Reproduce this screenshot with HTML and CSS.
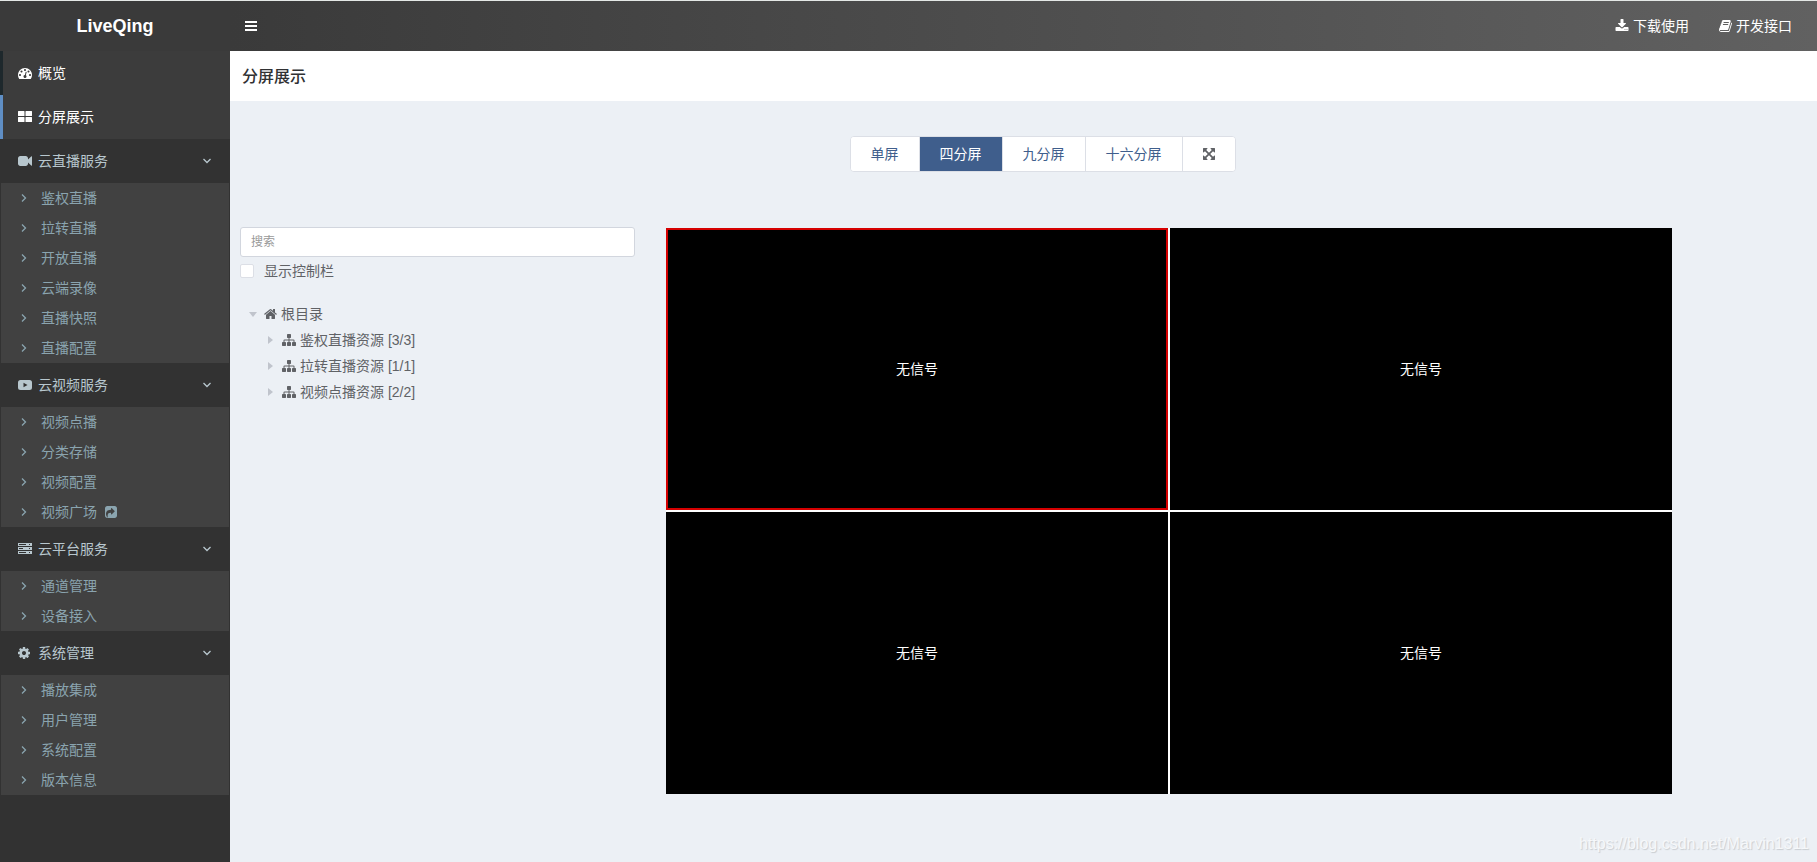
FILE: index.html
```html
<!DOCTYPE html>
<html lang="zh-CN">
<head>
<meta charset="utf-8">
<title>LiveQing</title>
<link rel="stylesheet" href="styles.css">
</head>
<body>
<svg class="sprite" aria-hidden="true">
  <symbol id="tachometer" viewBox="0 0 1792 1792"><path d="M384 1152q0-53-37.5-90.5t-90.5-37.5-90.5 37.5-37.5 90.5 37.5 90.5 90.5 37.5 90.5-37.5 37.5-90.5zm192-448q0-53-37.5-90.5t-90.5-37.5-90.5 37.5-37.5 90.5 37.5 90.5 90.5 37.5 90.5-37.5 37.5-90.5zm428 481l101-382q6-26-7.5-48.5t-38.5-29.5-48 6.5-30 39.5l-101 382q-60 5-107 43.5t-63 98.5q-20 77 20 146t117 89 146-20 89-117q16-60-6-117t-72-91zm660-33q0-53-37.5-90.5t-90.5-37.5-90.5 37.5-37.5 90.5 37.5 90.5 90.5 37.5 90.5-37.5 37.5-90.5zm-640-640q0-53-37.5-90.5t-90.5-37.5-90.5 37.5-37.5 90.5 37.5 90.5 90.5 37.5 90.5-37.5 37.5-90.5zm448 192q0-53-37.5-90.5t-90.5-37.5-90.5 37.5-37.5 90.5 37.5 90.5 90.5 37.5 90.5-37.5 37.5-90.5zm320 448q0 261-141 483-19 29-54 29h-1402q-35 0-54-29-141-221-141-483 0-182 71-348t191-286 286-191 348-71 348 71 286 191 191 286 71 348z"/></symbol>
  <symbol id="th-large" viewBox="0 0 14 14"><path d="M.5 1H6q.5 0 .5.5V5.500q0 .5-.5.5H.5Q0 6 0 5.500v-4Q0 1 .5 1zM8 1h5.500q.5 0 .5.5v4q0 .5-.5.5H8q-.5 0-.5-.5v-4Q7.500 1 8 1zM.5 7H6q.5 0 .5.5v4q0 .5-.5.5H.5q-.5 0-.5-.5v-4Q0 7 .5 7zM8 7h5.500q.5 0 .5.5v4q0 .5-.5.5H8q-.5 0-.5-.5v-4Q7.500 7 8 7z"/></symbol>
  <symbol id="video" viewBox="0 0 1792 1792"><path d="M1792 352v1088q0 42-39 59-13 5-25 5-27 0-45-19l-403-403v166q0 119-84.5 203.500t-203.500 84.500h-704q-119 0-203.500-84.500t-84.500-203.500v-704q0-119 84.500-203.500t203.500-84.500h704q119 0 203.500 84.500t84.500 203.500v165l403-402q18-19 45-19 12 0 25 5 39 17 39 59z"/></symbol>
  <symbol id="youtube" viewBox="0 0 14 14"><path fill-rule="evenodd" d="M2.500 2h9Q14 2 14 4.500v5Q14 12 11.500 12h-9Q0 12 0 9.500v-5Q0 2 2.500 2zM5.500 4.700v4.600L9.500 7z"/></symbol>
  <symbol id="server" viewBox="0 0 14 14"><path fill-rule="evenodd" d="M0 1h14v3H0zM1 2v1h7V2zM11 2v1h1V2zM0 5h14v3H0zM1 6v1h4V6zM11 6v1h1V6zM0 9h14v3H0zM1 10v1h7v-1zM11 10v1h1v-1z"/></symbol>
  <symbol id="cog" viewBox="128 0 1536 1792"><path d="M1152 896q0-106-75-181t-181-75-181 75-75 181 75 181 181 75 181-75 75-181zm512-109v222q0 12-8 23t-20 13l-185 28q-19 54-39 91 35 50 107 138 10 12 10 25t-9 23q-27 37-99 108t-94 71q-12 0-26-9l-138-108q-44 23-91 38-16 136-29 186-7 28-36 28h-222q-14 0-24.500-8.500t-11.500-21.500l-28-184q-49-16-90-37l-141 107q-10 9-25 9-14 0-25-11-126-114-165-168-7-10-7-23 0-12 8-23 15-21 51-66.500t54-70.500q-27-50-41-99l-183-27q-13-2-21-12.500t-8-23.500v-222q0-12 8-23t19-13l186-28q14-46 39-92-40-57-107-138-10-12-10-24 0-10 9-23 26-36 98.500-107.500t94.500-71.500q13 0 26 10l138 107q44-23 91-38 16-136 29-186 7-28 36-28h222q14 0 24.500 8.500t11.500 21.500l28 184q49 16 90 37l142-107q9-9 24-9 13 0 25 10 129 119 165 170 7 8 7 22 0 12-8 23-15 21-51 66.500t-54 70.500q26 50 41 98l183 28q13 2 21 12.500t8 23.500z"/></symbol>
  <symbol id="home" viewBox="64 0 1664 1792"><path d="M1472 992v480q0 26-19 45t-45 19h-384v-384h-256v384h-384q-26 0-45-19t-19-45v-480q0-1 .5-3t.5-3l575-474 575 474q1 2 1 6zm223-69l-62 74q-8 9-21 11h-3q-13 0-21-7l-692-577-692 577q-12 8-24 7-13-2-21-11l-62-74q-8-10-7-23.500t11-21.500l719-599q32-26 76-26t76 26l244 204v-195q0-14 9-23t23-9h192q14 0 23 9t9 23v408l219 182q10 8 11 21.500t-7 23.500z"/></symbol>
  <symbol id="sitemap" viewBox="0 0 1792 1792"><path d="M1792 1248v320q0 40-28 68t-68 28h-320q-40 0-68-28t-28-68v-320q0-40 28-68t68-28h96v-192h-512v192h96q40 0 68 28t28 68v320q0 40-28 68t-68 28h-320q-40 0-68-28t-28-68v-320q0-40 28-68t68-28h96v-192h-512v192h96q40 0 68 28t28 68v320q0 40-28 68t-68 28h-320q-40 0-68-28t-28-68v-320q0-40 28-68t68-28h96v-192q0-52 38-90t90-38h512v-192h-96q-40 0-68-28t-28-68v-320q0-40 28-68t68-28h320q40 0 68 28t28 68v320q0 40-28 68t-68 28h-96v192h512q52 0 90 38t38 90v192h96q40 0 68 28t28 68z"/></symbol>
  <symbol id="download" viewBox="0 0 1792 1792"><path d="M1344 1344q0-26-19-45t-45-19-45 19-19 45 19 45 45 19 45-19 19-45zm256 0q0-26-19-45t-45-19-45 19-19 45 19 45 45 19 45-19 19-45zm128-224v320q0 40-28 68t-68 28h-1472q-40 0-68-28t-28-68v-320q0-40 28-68t68-28h465l135 136q58 56 136 56t136-56l136-136h464q40 0 68 28t28 68zm-325-569q17 41-14 70l-448 448q-18 19-45 19t-45-19l-448-448q-31-29-14-70 17-39 59-39h256v-448q0-26 19-45t45-19h256q26 0 45 19t19 45v448h256q42 0 59 39z"/></symbol>
  <symbol id="book" viewBox="64 0 1664 1792"><path d="M1703 478q40 57 18 129l-275 906q-19 64-76.500 107.500t-122.500 43.500h-923q-77 0-148.500-53.500t-99.500-131.500q-24-67-2-127 0-4 3-27t4-37q1-8-3-21.500t-3-19.500q2-11 8-21t16.500-23.500 16.500-23.500q23-38 45-91.500t30-91.500q3-10 .5-30t-.5-28q3-11 17-28t17-23q21-36 42-92t25-90q1-9-2.500-32t.5-28q4-13 22-30.500t22-22.500q19-26 42.500-84.500t27.500-96.500q1-8-3-25.500t-2-26.500q2-8 9-18t18-23 17-21q8-12 16.500-30.500t15-35 16-36 19.500-32 26.500-23.500 36-11.500 47.500 5.500l-1 3q38-9 51-9h761q74 0 114 56t18 130l-274 906q-36 119-71.500 153.500t-128.500 34.500h-869q-27 0-38 15-11 16-1 43 24 70 144 70h923q29 0 56-15.500t35-41.500l300-987q7-22 5-57 38 15 59 43zm-1064 2q-4 13 2 22.500t20 9.500h608q13 0 25.500-9.500t16.500-22.500l21-64q4-13-2-22.500t-20-9.500h-608q-13 0-25.500 9.500t-16.500 22.500zm-83 256q-4 13 2 22.500t20 9.500h608q13 0 25.500-9.500t16.500-22.500l21-64q4-13-2-22.500t-20-9.500h-608q-13 0-25.500 9.500t-16.500 22.500z"/></symbol>
  <symbol id="expand" viewBox="128 128 1536 1536"><path d="M1411 541l-355 355 355 355 144-144q29-31 70-14 39 17 39 59v448q0 26-19 45t-45 19h-448q-42 0-59-40-17-39 14-69l144-144-355-355-355 355 144 144q31 30 14 69-17 40-59 40h-448q-26 0-45-19t-19-45v-448q0-42 40-59 39-17 69 14l144 144 355-355-355-355-144 144q-19 19-45 19-12 0-24-5-40-17-40-59v-448q0-26 19-45t45-19h448q42 0 59 40 17 39-14 69l-144 144 355 355 355-355-144-144q-31-30-14-69 17-40 59-40h448q26 0 45 19t19 45v448q0 42-39 59-13 5-25 5-26 0-45-19z"/></symbol>
  <symbol id="share" viewBox="128 128 1536 1536"><path d="M1005 1197l352-352q19-19 19-45t-19-45l-352-352q-30-31-69-14-40 17-40 59v160q-119 0-216 19.500t-162.500 51-114 79-76.500 95.500-44.500 109-21.500 111.500-5 110.500q0 181 167 404 10 12 25 12 7 0 13-3 22-9 19-33-44-354 62-473 46-52 130-75.500t224-23.500v160q0 42 40 59 12 5 24 5 26 0 45-19zm659-781v960q0 119-84.500 203.500t-203.500 84.500h-960q-119 0-203.500-84.500t-84.500-203.500v-960q0-119 84.500-203.500t203.500-84.500h960q119 0 203.500 84.500t84.500 203.500z"/></symbol>
  <symbol id="bars" viewBox="0 0 12 12"><path d="M0 1h12v2H0zM0 5h12v2H0zM0 9h12v2H0z"/></symbol>
  <symbol id="right" viewBox="0 0 6 10"><path class="line" d="M1 1.500L4.500 5 1 8.500"/></symbol>
  <symbol id="down" viewBox="0 0 10 10"><path class="line" d="M1.500 3L5 6.500 8.500 3"/></symbol>
</svg>

<header class="topbar">
  <a class="brand" href="#">LiveQing</a>
  <button class="toggle" type="button" aria-label="菜单"><svg class="icon-12"><use href="#bars"/></svg></button>
  <nav class="toplinks">
    <a href="#"><svg class="icon-14"><use href="#download"/></svg>下载使用</a>
    <a href="#"><svg class="icon-13"><use href="#book"/></svg>开发接口</a>
  </nav>
</header>

<div class="body">
  <nav class="sidebar">
    <a class="item top" href="#"><svg class="icon-14"><use href="#tachometer"/></svg><span>概览</span></a>
    <a class="item top active" href="#"><svg class="icon-14"><use href="#th-large"/></svg><span>分屏展示</span></a>

    <a class="item" href="#"><svg class="icon-14"><use href="#video"/></svg><span>云直播服务</span><svg class="caret"><use href="#down"/></svg></a>
    <ul class="sub">
      <li><a href="#"><svg class="chev"><use href="#right"/></svg>鉴权直播</a></li>
      <li><a href="#"><svg class="chev"><use href="#right"/></svg>拉转直播</a></li>
      <li><a href="#"><svg class="chev"><use href="#right"/></svg>开放直播</a></li>
      <li><a href="#"><svg class="chev"><use href="#right"/></svg>云端录像</a></li>
      <li><a href="#"><svg class="chev"><use href="#right"/></svg>直播快照</a></li>
      <li><a href="#"><svg class="chev"><use href="#right"/></svg>直播配置</a></li>
    </ul>

    <a class="item" href="#"><svg class="icon-14"><use href="#youtube"/></svg><span>云视频服务</span><svg class="caret"><use href="#down"/></svg></a>
    <ul class="sub">
      <li><a href="#"><svg class="chev"><use href="#right"/></svg>视频点播</a></li>
      <li><a href="#"><svg class="chev"><use href="#right"/></svg>分类存储</a></li>
      <li><a href="#"><svg class="chev"><use href="#right"/></svg>视频配置</a></li>
      <li><a href="#"><svg class="chev"><use href="#right"/></svg>视频广场<svg class="icon-12 share"><use href="#share"/></svg></a></li>
    </ul>

    <a class="item" href="#"><svg class="icon-14"><use href="#server"/></svg><span>云平台服务</span><svg class="caret"><use href="#down"/></svg></a>
    <ul class="sub">
      <li><a href="#"><svg class="chev"><use href="#right"/></svg>通道管理</a></li>
      <li><a href="#"><svg class="chev"><use href="#right"/></svg>设备接入</a></li>
    </ul>

    <a class="item" href="#"><svg class="icon-12 cog"><use href="#cog"/></svg><span>系统管理</span><svg class="caret"><use href="#down"/></svg></a>
    <ul class="sub">
      <li><a href="#"><svg class="chev"><use href="#right"/></svg>播放集成</a></li>
      <li><a href="#"><svg class="chev"><use href="#right"/></svg>用户管理</a></li>
      <li><a href="#"><svg class="chev"><use href="#right"/></svg>系统配置</a></li>
      <li><a href="#"><svg class="chev"><use href="#right"/></svg>版本信息</a></li>
    </ul>
  </nav>

  <main class="main">
    <h1 class="title">分屏展示</h1>
    <div class="modes">
      <div class="group">
        <button type="button">单屏</button>
        <button type="button" class="on">四分屏</button>
        <button type="button">九分屏</button>
        <button type="button">十六分屏</button>
        <button type="button" class="full" aria-label="全屏"><svg class="icon-12"><use href="#expand"/></svg></button>
      </div>
    </div>
    <div class="work">
      <section class="resources">
        <input class="search" type="text" placeholder="搜索" aria-label="搜索">
        <label class="check"><input type="checkbox"><span>显示控制栏</span></label>
        <ul class="tree">
          <li>
            <div class="node"><i class="tri open"></i><svg class="icon-13"><use href="#home"/></svg>根目录</div>
            <ul>
              <li class="node"><i class="tri"></i><svg class="icon-14"><use href="#sitemap"/></svg>鉴权直播资源 [3/3]</li>
              <li class="node"><i class="tri"></i><svg class="icon-14"><use href="#sitemap"/></svg>拉转直播资源 [1/1]</li>
              <li class="node"><i class="tri"></i><svg class="icon-14"><use href="#sitemap"/></svg>视频点播资源 [2/2]</li>
            </ul>
          </li>
        </ul>
      </section>
      <section class="screens">
        <div class="screen selected">无信号</div>
        <div class="screen">无信号</div>
        <div class="screen">无信号</div>
        <div class="screen">无信号</div>
      </section>
    </div>
  </main>
</div>
<div class="watermark">https://blog.csdn.net/Marvin1311</div>
</body>
</html>
```
FILE: styles.css
```css
* { box-sizing: border-box; }

body {
  margin: 0;
  min-height: 100vh;
  position: relative;
  display: flex;
  flex-direction: column;
  border-top: 1px solid #e4e8e6;
  background: #ecf0f5;
  color: #606266;
  font: 14px/20px "Liberation Sans", "Noto Sans CJK SC", sans-serif;
}

a { color: inherit; text-decoration: none; }
ul { list-style: none; margin: 0; padding: 0; }
button, input { font: inherit; color: inherit; }
svg { fill: currentColor; flex: none; display: block; }

.sprite { position: absolute; width: 0; height: 0; }
.line { fill: none; stroke: currentColor; stroke-width: 1.3; }
.icon-14 { width: 14px; height: 14px; }
.icon-13 { width: 13px; height: 14px; }
.icon-12 { width: 12px; height: 12px; }

.topbar {
  display: flex;
  align-items: center;
  height: 50px;
  color: #fff;
  background: linear-gradient(to right, #3a3a3a 230px, #616161);
}
.brand {
  width: 230px;
  text-align: center;
  font-size: 18px;
  font-weight: 700;
}
.toggle {
  padding: 15px;
  border: 0;
  background: none;
}
.toplinks {
  display: flex;
  gap: 30px;
  margin-left: auto;
  padding-right: 25px;
}
.toplinks a { display: flex; align-items: center; gap: 4px; }

.body { display: flex; flex: 1; }

.sidebar {
  width: 230px;
  flex: none;
  background: #323232;
}
.item {
  display: flex;
  align-items: center;
  height: 44px;
  padding-right: 18px;
  border-left: 3px solid transparent;
  padding-left: 15px;
  color: #b8c7ce;
}
.item span { margin-left: 6px; }
.item .cog { width: 12px; height: 14px; margin-right: 2px; }
.item.top {
  color: #fff;
  background: #3c3c3c;
  border-left-color: #1e282c;
}
.item.top.active { border-left-color: #5f8ec4; }
.caret { width: 10px; height: 10px; margin-left: auto; }

.sub {
  margin: 0 1px;
  background: #414141;
  color: #8aa4af;
}
.sub a {
  display: flex;
  align-items: center;
  height: 30px;
  padding-left: 20px;
}
.chev { width: 6px; height: 10px; margin-right: 14px; }
.share { margin-left: 8px; }

.main { flex: 1; min-width: 0; }
.title {
  margin: 0;
  padding: 16px 12px 14px;
  background: #fff;
  color: #303133;
  font-size: 16px;
  line-height: 20px;
  font-weight: 500;
}

.modes {
  display: flex;
  justify-content: center;
  padding: 35px 0 0 38px;
}
.group {
  display: flex;
  border: 1px solid #dcdfe6;
  border-radius: 4px;
  background: #fff;
  overflow: hidden;
}
.group button {
  height: 34px;
  padding: 0 20px;
  border: 0;
  border-right: 1px solid #dcdfe6;
  background: #fff;
  color: #3f5e8c;
}
.group .on { background: #3f5e8c; color: #fff; }
.group .full { border-right: 0; color: #606266; }

.work {
  display: grid;
  grid-template-columns: 395fr 1006fr 104fr;
  column-gap: 31px;
  align-items: start;
  padding: 55px 10px 60px;
}
.search {
  display: block;
  width: 100%;
  height: 30px;
  padding: 0 10px;
  border: 1px solid #d2d6de;
  border-radius: 3px;
  background: #fff;
  font-size: 12px;
}
.search::placeholder { color: #999; }
.check {
  display: flex;
  align-items: center;
  gap: 10px;
  padding-top: 4px;
}
.check input {
  appearance: none;
  width: 14px;
  height: 14px;
  margin: 0;
  border: 1px solid #dcdfe6;
  border-radius: 2px;
  background: #fff;
}
.tree { padding-top: 20px; }
.node {
  display: flex;
  align-items: center;
  gap: 4px;
  height: 26px;
  padding-left: 6px;
}
.tree ul { padding-left: 18px; }
.tri {
  width: 14px;
  height: 8px;
  background: #c0c4cc;
  clip-path: polygon(4px 0, 9px 4px, 4px 8px);
}
.tri.open { clip-path: polygon(3px 2px, 11px 2px, 7px 7px); }

.screens {
  display: grid;
  grid-template: 1fr 1fr / 1fr 1fr;
  gap: 2px;
  aspect-ratio: 16 / 9;
  margin-top: 1px;
  background: #fff;
}
.screen {
  display: flex;
  align-items: center;
  justify-content: center;
  background: #000;
  color: #fff;
}
.selected { border: 2px solid #d50000; }

.watermark {
  position: absolute;
  right: 8px;
  bottom: 8px;
  font-size: 16px;
  color: #f6f8fa;
  text-shadow: 1px 1px 1px #c8ccd0;
}
```
